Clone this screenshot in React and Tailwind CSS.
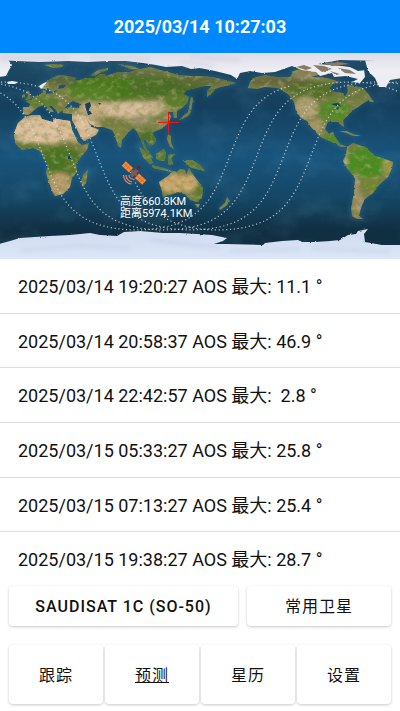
import React, { useState } from "react";

const passes = [
  { time: "2025/03/14 19:20:27", max: "11.1" },
  { time: "2025/03/14 20:58:37", max: "46.9" },
  { time: "2025/03/14 22:42:57", max: " 2.8" },
  { time: "2025/03/15 05:33:27", max: "25.8" },
  { time: "2025/03/15 07:13:27", max: "25.4" },
  { time: "2025/03/15 19:38:27", max: "28.7" },
];

const tabs = ["跟踪", "预测", "星历", "设置"];

const land = [
  // Europe and Asia
  "M23 114L23 107L29 107L30 104L26 101L31 100L34 97L38 95L42 94L43 90L46 91L46 94L54 93L58 89L64 88L66 85L60 84L58 89L53 92L50 91L48 88L44 89L40 88L40 85L46 82L52 78L60 75L68 76L76 78L74 81L80 80L86 78L95 78L100 74L104 74L106 76L118 72L130 72L140 69L150 67L160 70L168 72L178 75L190 76L200 76L212 77L225 80L236 83L230 85L221 87L215 89L212 93L207 97L207 91L212 86L204 86L196 88L187 90L183 94L189 97L187 103L182 108L177 111L177 118L174 118L173 112L168 112L171 116L170 120L167 124L163 128L156 131L152 133L156 139L155 143L150 146L145 139L143 141L147 150L153 158L149 156L144 148L141 140L137 132L133 128L128 133L122 140L121 148L118 146L115 135L112 130L103 127L97 127L90 124L86 118L91 127L95 128L99 130L96 135L84 141L81 138L77 129L72 120L72 114L63 113L62 109L70 107L79 108L80 104L73 101L68 104L64 109L58 114L56 110L52 106L49 106L54 112L50 112L44 105L38 107L32 112L28 115Z",
  // Africa and Madagascar
  "M25 117L32 115L40 115L42 119L53 122L55 118L63 120L70 121L72 130L78 142L82 145L89 143L87 150L80 158L76 164L77 172L72 178L70 187L63 194L55 196L53 193L48 180L46 172L48 165L43 157L40 151L33 148L22 150L15 143L14 133L18 123Z",
  "M88 170L86 183L83 187L81 182L83 175Z",
  // British Isles and northern islands
  "M26 91L29 91L31 99L25 100L28 96ZM22 95L25 94L25 97L22 98Z",
  "M44 65L52 64L64 65L62 67L54 68ZM91 75L98 70L108 68L108 70L99 73L95 76ZM118 64L132 66L142 70L130 69Z",
  // Japan, Taiwan, Philippines, Indonesia
  "M191 97L193 98L192 105L191 112L188 116L182 119L179 120L184 115L188 112L189 107ZM168 126L169 127L168 130ZM168 134L171 136L171 142L174 149L170 147L167 139Z",
  "M139 147L144 150L150 156L153 163L150 164L143 157ZM152 165L164 168L172 171L171 172L153 168ZM156 154L164 149L166 153L164 161L157 160ZM168 155L175 154L171 158L173 164L170 165L168 164ZM183 160L192 160L200 165L205 171L196 169L190 167Z",
  // Australia, New Zealand
  "M159 182L168 176L173 171L177 172L180 169L185 170L186 175L189 168L192 173L197 180L203 188L202 197L197 202L190 200L185 194L178 192L170 195L163 197L162 191ZM195 204L200 204L198 208ZM227 197L230 201L226 206L220 210L219 208L225 203Z",
  // North and Central America
  "M248 88L250 82L254 78L265 75L276 77L290 77L293 72L303 74L314 77L327 78L340 82L333 84L329 88L334 92L343 93L345 97L348 91L347 85L354 86L363 88L369 95L374 102L367 101L361 105L355 109L350 113L343 120L344 127L341 125L338 122L328 122L325 129L329 134L333 132L335 137L340 144L347 147L341 147L332 142L320 137L315 131L311 127L307 121L301 118L296 111L294 102L288 94L278 88L265 87L257 89Z",
  "M291 72L300 69L312 71L322 74L314 76L300 76ZM339 131L346 131L353 134L361 136L353 136L346 133Z",
  // South America
  "M347 147L353 143L365 147L375 156L382 158L393 162L392 168L388 177L379 185L373 193L365 199L362 205L360 211L359 216L363 219L357 219L352 216L351 208L354 193L355 178L347 168L343 161L346 155Z",
].join("");

const ice = [
  "M-9 44L409 44L409 59L388 61L340 60L318 64L342 66L364 69L365 77L360 83L352 82L358 79L346 76L334 77L332 73L320 76L316 72L304 71L292 66L275 72L262 73L250 71L240 73L237 79L231 75L215 71L200 68L191 69L182 66L166 67L156 65L143 63L126 61L108 61L88 62L68 61L40 62L-9 60Z",
  "M-9 58L9 61L12 65L9 70L6 76L-9 78ZM7 82L12 81L18 82L15 84L8 84Z",
  "M365 60L409 57L409 77L390 80L386 87L379 87L375 78L368 71Z",
  "M39 86L44 83L47 82L44 86L41 89Z",
  "M-9 246L10 241L20 238L50 236L70 235L90 233L100 235L117 236L124 232L140 231L163 233L180 233L197 234L212 235L227 238L223 241L214 244L225 244L263 245L265 243L282 241L298 240L302 242L315 242L330 241L340 240L348 235L356 234L358 231L368 229L364 234L365 242L382 245L409 245L409 270L-9 270Z",
].join("");

// colour patches laid over the land: [cx, cy, rx, ry, colour]
const terrain = [
  [42, 130, 34, 15, "#dcbe9c"],
  [80, 127, 20, 14, "#d8ba96"],
  [60, 160, 22, 13, "#4a7222"],
  [32, 147, 20, 3, "#5f7a30"],
  [60, 184, 12, 12, "#b89a6c"],
  [72, 166, 6, 9, "#5c762a"],
  [98, 109, 20, 9, "#c2aa82"],
  [134, 110, 28, 9, "#d6bb9a"],
  [160, 106, 14, 5, "#c0a882"],
  [144, 121, 12, 6, "#98906a"],
  [118, 134, 7, 9, "#7d8540"],
  [158, 124, 12, 6, "#7f8550"],
  [120, 86, 52, 13, "#48761f"],
  [92, 93, 26, 7, "#548026"],
  [172, 87, 44, 10, "#4c6c25"],
  [206, 80, 30, 5, "#62683c"],
  [130, 74, 40, 3, "#5e6844"],
  [176, 101, 12, 7, "#5a7c2a"],
  [40, 102, 20, 6, "#5b7a32"],
  [27, 110, 7, 4, "#a08d5c"],
  [60, 80, 18, 5, "#56653d"],
  [148, 140, 12, 10, "#4f6e2b"],
  [158, 157, 18, 12, "#5a7a34"],
  [195, 166, 12, 5, "#5a7a34"],
  [178, 183, 24, 10, "#c8a56c"],
  [200, 191, 4, 13, "#5c782c"],
  [178, 172, 14, 3, "#7e8040"],
  [280, 81, 32, 6, "#656640"],
  [312, 90, 26, 9, "#526c2a"],
  [306, 108, 12, 12, "#ab9c70"],
  [316, 126, 8, 8, "#a29464"],
  [335, 111, 16, 11, "#56882a"],
  [352, 92, 16, 8, "#6c7840"],
  [310, 76, 18, 3, "#9b8a6d"],
  [335, 139, 10, 6, "#568829"],
  [366, 163, 22, 16, "#4c8c24"],
  [388, 166, 6, 9, "#a0994f"],
  [371, 184, 9, 9, "#728634"],
  [356, 192, 3, 22, "#ae966e"],
  [360, 204, 6, 11, "#9c8d68"],
  [345, 160, 3, 8, "#a49468"],
];

// ground track of a 64.6 degree orbit on a 400px wide world, in map pixels
const groundTrack = () => {
  const incl = (64.6 * Math.PI) / 180;
  const end = 6 * Math.PI + 2.9;
  let d = "";
  let last = null;
  for (let u = -1.3; u < end; u += 0.02) {
    const lat = -Math.asin(Math.sin(incl) * Math.cos(u));
    const turns = Math.round(u / (2 * Math.PI));
    const lon =
      Math.atan2(Math.sin(u), Math.cos(u) * Math.cos(incl)) + turns * 2 * Math.PI;
    const raw = 217.5 + (lon * 400) / (2 * Math.PI) - (u * 27) / (2 * Math.PI);
    const x = ((raw % 400) + 400) % 400;
    const y = 156 - (lat * 206) / Math.PI;
    const jump = last === null || Math.abs(x - last) > 200;
    d += `${jump ? "M" : "L"}${x.toFixed(1)} ${y.toFixed(1)}`;
    last = x;
  }
  return d;
};

const Satellite = () => (
  <g>
    <g transform="translate(134 173) rotate(43)">
      <path d="M-14-3h10v6h-10zM4-3h10v6h-10z" fill="#fb8a33" />
      <path d="M-11-3v6M-8-3v6M8-3v6M11-3v6M-14 0h10M4 0h10" stroke="#a9532a" strokeWidth="0.5" />
      <path d="M-4 0h8" stroke="#8a5a4c" strokeWidth="2" />
      <rect x="-2" y="-5" width="4" height="9" rx="1" fill="#7c5a5c" />
    </g>
    <circle cx="138.500" cy="168" r="2.200" fill="#4b3640" />
    <g fill="none" stroke="#f08468" strokeWidth="1.2">
      <path d="M129 175a4 4 0 0 0 4 4" />
      <path d="M126 175a7 7 0 0 0 6 7" />
      <path d="M123.500 175a9 9 0 0 0 8 9" />
    </g>
  </g>
);

const WorldMap = () => (
  <svg viewBox="0 53 400 206" className="block w-full" role="img" aria-label="卫星地图">
    <defs>
      <linearGradient id="sea" x1="0" y1="0" x2="0" y2="1">
        <stop offset="0" stopColor="#1f4c66" />
        <stop offset="0.25" stopColor="#143f5d" />
        <stop offset="0.5" stopColor="#19547c" />
        <stop offset="0.7" stopColor="#154766" />
        <stop offset="0.86" stopColor="#112f42" />
        <stop offset="1" stopColor="#112f42" />
      </linearGradient>
      <linearGradient id="ice" x1="0" y1="0" x2="0" y2="1">
        <stop offset="0" stopColor="#d6d4e2" />
        <stop offset="0.12" stopColor="#eeeef4" />
        <stop offset="0.86" stopColor="#d3def2" />
        <stop offset="1" stopColor="#e0edfb" />
      </linearGradient>
      <filter id="coast" filterUnits="userSpaceOnUse" x="-10" y="43" width="420" height="227">
        <feTurbulence type="fractalNoise" baseFrequency="0.3" numOctaves="2" seed="4" />
        <feDisplacementMap in="SourceGraphic" scale="2" xChannelSelector="R" yChannelSelector="G" />
      </filter>
      <filter id="soft" x="-50%" y="-50%" width="200%" height="200%">
        <feGaussianBlur stdDeviation="2" />
      </filter>
      <filter id="grain" x="0" y="0" width="100%" height="100%">
        <feTurbulence type="fractalNoise" baseFrequency="0.14 0.18" numOctaves="4" seed="9" />
        <feColorMatrix values="0 0 0 0 0.14  0 0 0 0 0.2  0 0 0 0 0.03  2.6 0 0 0 -1.2" />
      </filter>
      <filter id="highlights" x="0" y="0" width="100%" height="100%">
        <feTurbulence type="fractalNoise" baseFrequency="0.14 0.2" numOctaves="4" seed="21" />
        <feColorMatrix values="0 0 0 0 0.84  0 0 0 0 0.76  0 0 0 0 0.5  2.4 0 0 0 -1.2" />
      </filter>
      <filter id="swell" x="0" y="0" width="100%" height="100%">
        <feTurbulence type="fractalNoise" baseFrequency="0.03 0.04" numOctaves="4" seed="5" />
        <feColorMatrix values="0 0 0 0 0.18  0 0 0 0 0.45  0 0 0 0 0.6  2 0 0 0 -0.95" />
      </filter>
      <clipPath id="landClip">
        <path d={land} />
      </clipPath>
    </defs>

    <rect y="53" width="400" height="206" fill="url(#sea)" />
    <rect y="53" width="400" height="206" filter="url(#swell)" opacity="0.15" />
    <path d={land} fill="none" stroke="#2f7496" strokeWidth="3" opacity="0.4" filter="url(#soft)" />

    <g filter="url(#coast)">
      <g clipPath="url(#landClip)">
        <rect y="53" width="400" height="206" fill="#787d45" />
        {terrain.map(([cx, cy, rx, ry, fill], i) => (
          <ellipse key={i} cx={cx} cy={cy} rx={rx} ry={ry} fill={fill} filter="url(#soft)" />
        ))}
        <rect y="53" width="400" height="206" filter="url(#grain)" opacity="0.45" />
        <rect y="53" width="400" height="206" filter="url(#highlights)" opacity="0.35" />
      </g>
      {/* inland water */}
      <path
        d="M85 104L90 102L91 106L89 109L92 114L88 115L86 109ZM98 103L101 103L100 105ZM331 104L338 103L341 106L336 106ZM336 108L339 107L338 110ZM68 156h3v3h-3z"
        fill="#173f5c"
      />
      <path d={ice} fill="url(#ice)" />
      {/* bare ground among the arctic islands */}
      <path
        d="M296 67L304 65L312 68L306 70ZM313 65L324 66L332 69L322 72ZM338 68L350 70L356 74L345 73ZM324 63L340 62L350 64L332 66ZM300 70L311 71L305 73ZM330 71L340 74L336 75Z"
        fill="#8a7964"
      />
      <path d="M350 67L362 66L366 70L358 71Z" fill="#1c4864" />
    </g>
    <path
      d="M0 58H70M90 57L150 59M180 62L215 66M190 57L240 60M20 250L80 246L130 248M150 240L220 248M230 251L300 249M310 248L390 252"
      fill="none"
      stroke="#a9b0cf"
      strokeWidth="2"
      opacity="0.4"
      filter="url(#soft)"
    />

    <path d={groundTrack()} fill="none" stroke="#e8eef2" strokeWidth="1.2" strokeDasharray="1.2 2.6" opacity="0.75" />
    <path d="M158 122.500h21M168.500 112v21" stroke="#f01414" strokeWidth="1" />
    <Satellite />
    <g fill="#fff" fontSize="11" className="font-[Roboto,'Noto_Sans_CJK_SC',sans-serif]">
      <text x="120" y="205">高度660.8KM</text>
      <text x="120" y="217">距离5974.1KM</text>
    </g>
  </svg>
);

const raised = "rounded bg-white pt-[2px] text-base tracking-[1px] text-[#111] shadow-[0_1px_3px_rgba(0,0,0,0.22)]";

const App = () => {
  const [active, setActive] = useState("预测");

  return (
    <div className="flex min-h-screen flex-col bg-white font-[Roboto,'Noto_Sans_CJK_SC',sans-serif] text-[#111]">
      <header className="flex h-[53px] items-center justify-center bg-[#0088ff]">
        <h1 className="text-lg font-bold text-white">2025/03/14 10:27:03</h1>
      </header>

      <WorldMap />

      <ul className="flex flex-1 flex-col divide-y divide-[#dcdcdc]">
        {passes.map((pass) => (
          <li key={pass.time} className="flex flex-1 items-center px-[18px] pt-[2px] text-lg whitespace-pre">
            {`${pass.time} AOS 最大: ${pass.max} °`}
          </li>
        ))}
      </ul>

      <div className="flex gap-[9px] px-[9px]">
        <button className={`${raised} h-10 flex-[229] font-medium`}>SAUDISAT 1C (SO-50)</button>
        <button className={`${raised} h-10 flex-[144]`}>常用卫星</button>
      </div>

      <nav className="mt-[19px] mb-[7px] grid grid-cols-4 gap-[2px] px-[9px]">
        {tabs.map((tab) => (
          <button
            key={tab}
            onClick={() => setActive(tab)}
            className={tab === active ? `${raised} h-[59px] underline` : `${raised} h-[59px]`}
          >
            {tab}
          </button>
        ))}
      </nav>
    </div>
  );
};

export default App;
